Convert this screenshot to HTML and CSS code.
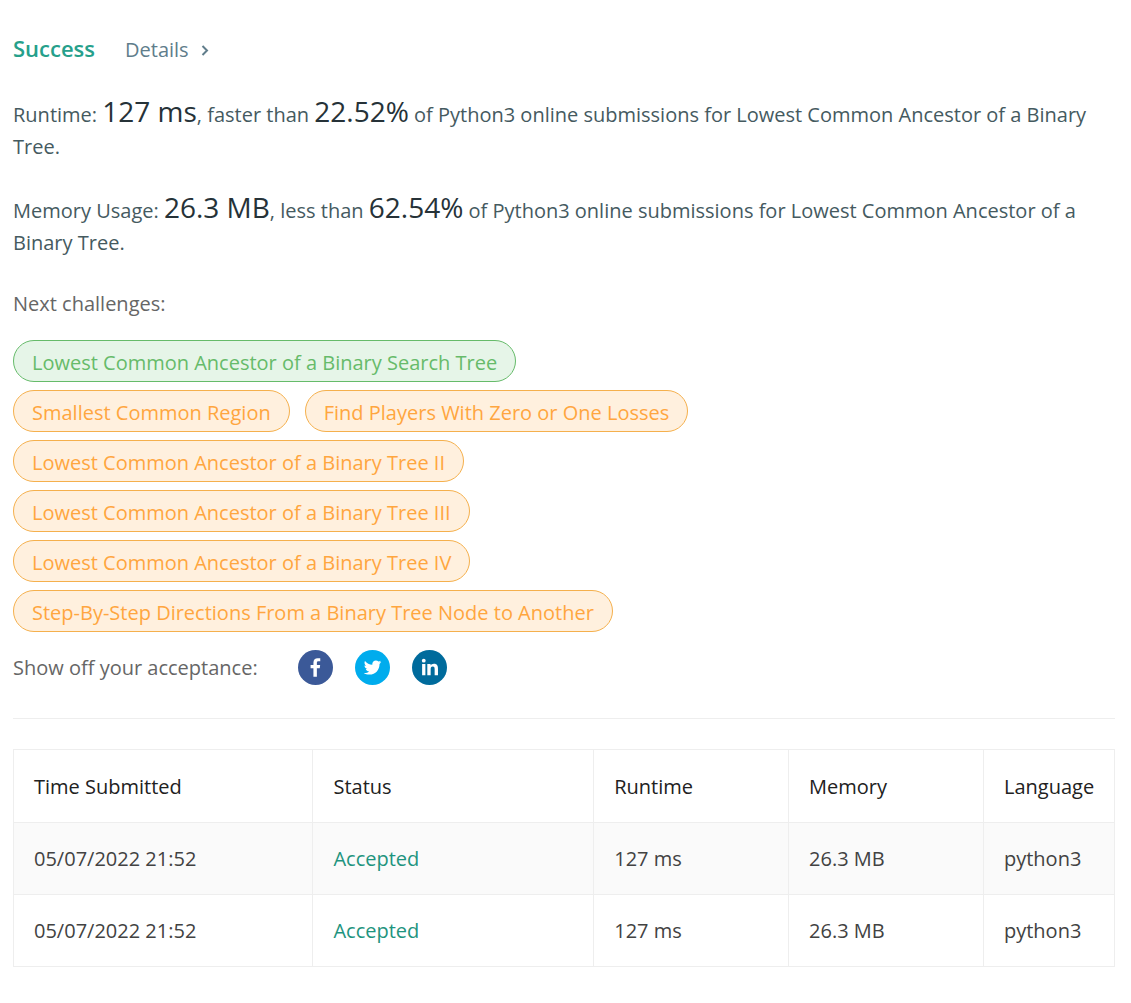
FILE: index.html
```html
<!DOCTYPE html>
<html lang="en">
<head>
<meta charset="utf-8">
<meta name="viewport" content="width=device-width, initial-scale=1">
<title>Submission result</title>
<link rel="stylesheet" href="styles.css">
</head>
<body>
<main class="result">
  <header class="result-header">
    <h1 class="status">Success</h1>
    <a class="details" href="#details">Details
      <svg class="chevron" viewBox="0 0 8 12" aria-hidden="true"><path d="M1.500 2 6 6.500 1.500 11"/></svg>
    </a>
  </header>
  <p class="stat">Runtime: <span class="figure">127 ms</span>, faster than <span class="figure">22.52%</span> of Python3 online submissions for Lowest Common Ancestor of a Binary Tree.</p>
  <p class="stat">Memory Usage: <span class="figure">26.3 MB</span>, less than <span class="figure">62.54%</span> of Python3 online submissions for Lowest Common Ancestor of a Binary Tree.</p>
  <section class="challenges">
    <h2 class="label">Next challenges:</h2>
    <div class="tags">
      <div class="tag-row"><a class="tag easy" href="#c1">Lowest Common Ancestor of a Binary Search Tree</a></div>
      <div class="tag-row"><a class="tag" href="#c2">Smallest Common Region</a><a class="tag" href="#c3">Find Players With Zero or One Losses</a></div>
      <div class="tag-row"><a class="tag" href="#c4">Lowest Common Ancestor of a Binary Tree II</a></div>
      <div class="tag-row"><a class="tag" href="#c5">Lowest Common Ancestor of a Binary Tree III</a></div>
      <div class="tag-row"><a class="tag" href="#c6">Lowest Common Ancestor of a Binary Tree IV</a></div>
      <div class="tag-row"><a class="tag" href="#c7">Step-By-Step Directions From a Binary Tree Node to Another</a></div>
    </div>
  </section>
  <div class="share">
    <span class="label">Show off your acceptance:</span>
    <div class="share-links">
      <a href="#facebook" aria-label="Facebook"><svg class="social" viewBox="0 0 64 64" aria-hidden="true"><circle cx="32" cy="32" r="32" fill="#3b5998"/><path fill="#fff" d="M34.500 49V33.500h5.200l.8-6h-6v-3.900c0-1.700.5-2.900 3-2.900h3.200v-5.400c-.6-.1-2.500-.2-4.700-.2-4.600 0-7.800 2.800-7.800 8v4.400H23v6h5.200V49h6.300z"/></svg></a>
      <a href="#twitter" aria-label="Twitter"><svg class="social" viewBox="0 0 64 64" aria-hidden="true"><circle cx="32" cy="32" r="32" fill="#00aced"/><path fill="#fff" d="M48 22.100c-1.200.5-2.400.9-3.800 1 1.400-.8 2.400-2.100 2.900-3.600-1.300.8-2.700 1.300-4.200 1.600C41.700 19.800 40 19 38.200 19c-3.600 0-6.600 2.900-6.600 6.600 0 .5.1 1 .2 1.500-5.500-.3-10.300-2.900-13.500-6.900-.6 1-.9 2.100-.9 3.300 0 2.300 1.200 4.300 2.900 5.500-1.100 0-2.100-.3-3-.8v.1c0 3.200 2.300 5.800 5.300 6.400-.6.1-1.100.2-1.700.2-.4 0-.8 0-1.200-.1.800 2.600 3.300 4.500 6.100 4.600-2.200 1.800-5.100 2.800-8.200 2.800-.5 0-1.100 0-1.600-.1 2.900 1.900 6.400 2.900 10.100 2.900 12.100 0 18.700-10 18.700-18.700v-.8c1.200-1 2.300-2.100 3.200-3.400z"/></svg></a>
      <a href="#linkedin" aria-label="LinkedIn"><svg class="social" viewBox="0 0 64 64" aria-hidden="true"><circle cx="32" cy="32" r="32" fill="#006b9c"/><g fill="#fff"><circle cx="21.500" cy="19.500" r="3.500"/><path d="M18.500 25.500h6V46h-6zM28 25.500h6v2.800c1-1.800 3.200-3.300 6.200-3.300 6 0 7.300 4 7.300 9.300V46h-6.100V35.300c0-2.500-.3-5-3.500-5-3.100 0-3.800 2.400-3.800 5V46H28z"/></g></svg></a>
    </div>
  </div>
  <hr class="divider">
  <table class="submissions">
    <thead><tr><th class="time">Time Submitted</th><th class="outcome">Status</th><th class="metric">Runtime</th><th class="metric">Memory</th><th>Language</th></tr></thead>
    <tbody>
      <tr><td>05/07/2022 21:52</td><td><a class="accepted" href="#s1">Accepted</a></td><td>127 ms</td><td>26.3 MB</td><td>python3</td></tr>
      <tr><td>05/07/2022 21:52</td><td><a class="accepted" href="#s2">Accepted</a></td><td>127 ms</td><td>26.3 MB</td><td>python3</td></tr>
    </tbody>
  </table>
</main>
</body>
</html>
```
FILE: styles.css
```css
* { box-sizing: border-box; }

body {
  margin: 0;
  background: #fff;
  color: #546e7a;
  font: 20px/32px "Open Sans", "Noto Sans", sans-serif;
}

a { color: inherit; text-decoration: none; }

.result { padding: 32px 16px 32px 13px; }

.result-header { display: flex; align-items: baseline; gap: 30px; padding-bottom: 1px; }

.status { margin: 0; color: #26a08b; font-size: 22px; font-weight: 600; }

.details { display: flex; align-items: center; gap: 12px; color: #607d8b; }

.chevron { width: 8px; height: 12px; fill: none; stroke: currentColor; stroke-width: 2; }

.stat { margin: 32px 0 0; color: #455a5f; }

.figure { color: #263238; font-size: 28px; line-height: 24px; }

.label { margin: 0; color: #666; font-size: 20px; font-weight: 400; }

.challenges { margin-top: 29px; }

.tags { display: grid; gap: 8px; margin-top: 20px; }

.tag-row { display: flex; flex-wrap: wrap; gap: 15px; }

.tag {
  padding: 6px 18px 2px;
  border: 1px solid #f5b04d;
  border-radius: 21px;
  background: #fff0de;
  color: #ffa63f;
}

.easy { border-color: #66bb6a; background: #e6f5e8; color: #66bb6a; }

.share { display: flex; align-items: center; gap: 40px; margin-top: 18px; }

.share-links { display: flex; gap: 22px; }

.social { display: block; width: 35px; height: 35px; }

.divider { margin: 33px 0 30px; border: 0; border-top: 1px solid #eee; }

.submissions { width: 100%; table-layout: fixed; border-collapse: collapse; color: #424242; }

.submissions th,
.submissions td { padding: 20px; border: 1px solid #eee; font-weight: 400; text-align: left; }

.submissions td { line-height: 31px; }

.submissions th { padding: 21px 20px 19px; color: #212121; }

.submissions .time { width: 27.2%; }

.submissions .outcome { width: 25.5%; }

.submissions .metric { width: 17.7%; }

.submissions tbody tr:first-child { background: #fafafa; }

.accepted { color: #1e947e; }
```
